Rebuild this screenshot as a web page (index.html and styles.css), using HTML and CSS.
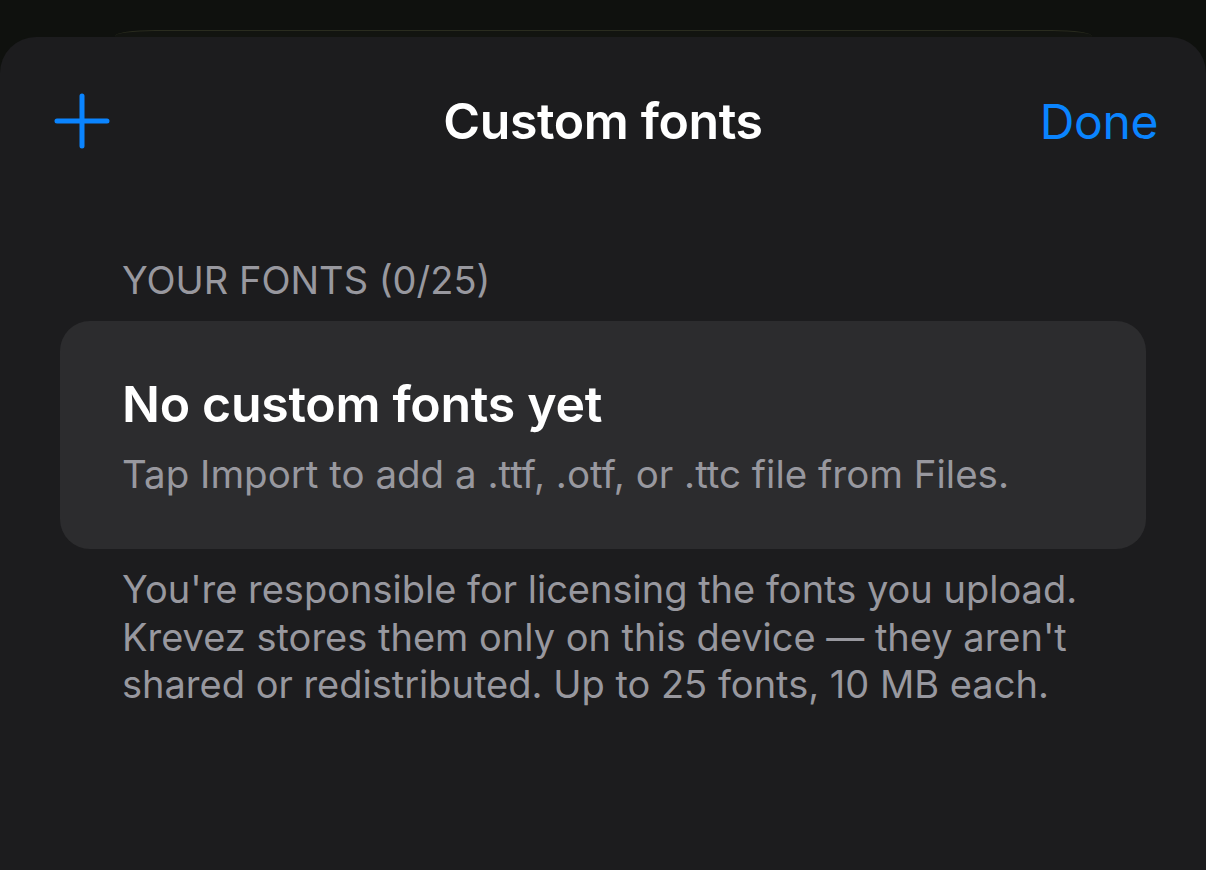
FILE: index.html
```html
<!DOCTYPE html>
<html lang="en">
  <head>
    <meta charset="UTF-8" />
    <meta name="viewport" content="width=device-width, initial-scale=1.0" />
    <title>Custom fonts</title>
    <link rel="stylesheet" href="styles.css">
  </head>
  <body>
    <!-- Sheet stacked behind -->
    <div class="back-sheet"></div>

    <div class="sheet">
      <div class="nav">
        <button class="nav-add" aria-label="Import">
          <svg width="56" height="56" viewBox="0 0 56 56">
            <path d="M28 3v50M3 28h50" stroke="#0a84ff" stroke-width="5" stroke-linecap="round" fill="none" />
          </svg>
        </button>
        <h1 class="nav-title">Custom fonts</h1>
        <button class="nav-done">Done</button>
      </div>

      <div class="section">
        <div class="section-header">YOUR FONTS (0/25)</div>
        <div class="card">
          <div class="card-title">No custom fonts yet</div>
          <div class="card-text">Tap Import to add a .ttf, .otf, or .ttc file from Files.</div>
        </div>
        <p class="section-footer">
          You're responsible for licensing the fonts you upload.
          Krevez stores them only on this device — they aren't
          shared or redistributed. Up to 25 fonts, 10 MB each.
        </p>
      </div>
    </div>
  </body>
</html>
```

FILE: styles.css
```css
html,
body {
  height: 100%;
}

body {
  margin: 0;
  background-color: #0f110e;
  font-family: Inter, "Noto Sans", sans-serif;
  display: flex;
  flex-direction: column;
  overflow: hidden;
}

.back-sheet {
  height: 6px;
  margin: 30px 114px 0 115px;
  background-color: #121410;
  border-top: 1px solid #2a2c1f;
  border-radius: 40px 40px 0 0 / 6px 6px 0 0;
  flex-shrink: 0;
}

.sheet {
  flex: 1;
  background-color: #1c1c1e;
  border-radius: 36px 36px 0 0;
  padding-top: 52px;
}

/* Navigation bar */
.nav {
  height: 64px;
  display: flex;
  align-items: center;
  justify-content: space-between;
  padding: 0 48px 0 54px;
  position: relative;
}

.nav button {
  background: none;
  border: none;
  padding: 0;
  cursor: pointer;
}

.nav-add svg {
  display: block;
}

.nav-title {
  position: absolute;
  left: 0;
  right: 0;
  margin: 0;
  text-align: center;
  color: #ffffff;
  font-size: 50px;
  font-weight: 600;
  letter-spacing: -0.4px;
  pointer-events: none;
}

.nav-done {
  color: #0a84ff;
  font-family: Inter, "Noto Sans", sans-serif;
  font-size: 48px;
  font-weight: 400;
  letter-spacing: -0.4px;
}

/* Grouped section */
.section {
  padding: 0 60px;
  margin-top: 104px;
}

.section-header {
  color: #98989f;
  font-size: 38px;
  line-height: 46px;
  padding-left: 62px;
  margin-bottom: 18px;
}

.card {
  background-color: #2c2c2e;
  border-radius: 30px;
  padding: 53px 62px 52px;
}

.card-title {
  color: #ffffff;
  font-size: 50px;
  font-weight: 600;
  line-height: 60px;
  letter-spacing: -0.3px;
}

.card-text {
  color: #98989f;
  font-size: 38.5px;
  line-height: 46px;
  margin-top: 17px;
}

.section-footer {
  color: #98989f;
  font-size: 38px;
  line-height: 47.5px;
  margin: 17px 0 0;
  padding-left: 62px;
}
```
